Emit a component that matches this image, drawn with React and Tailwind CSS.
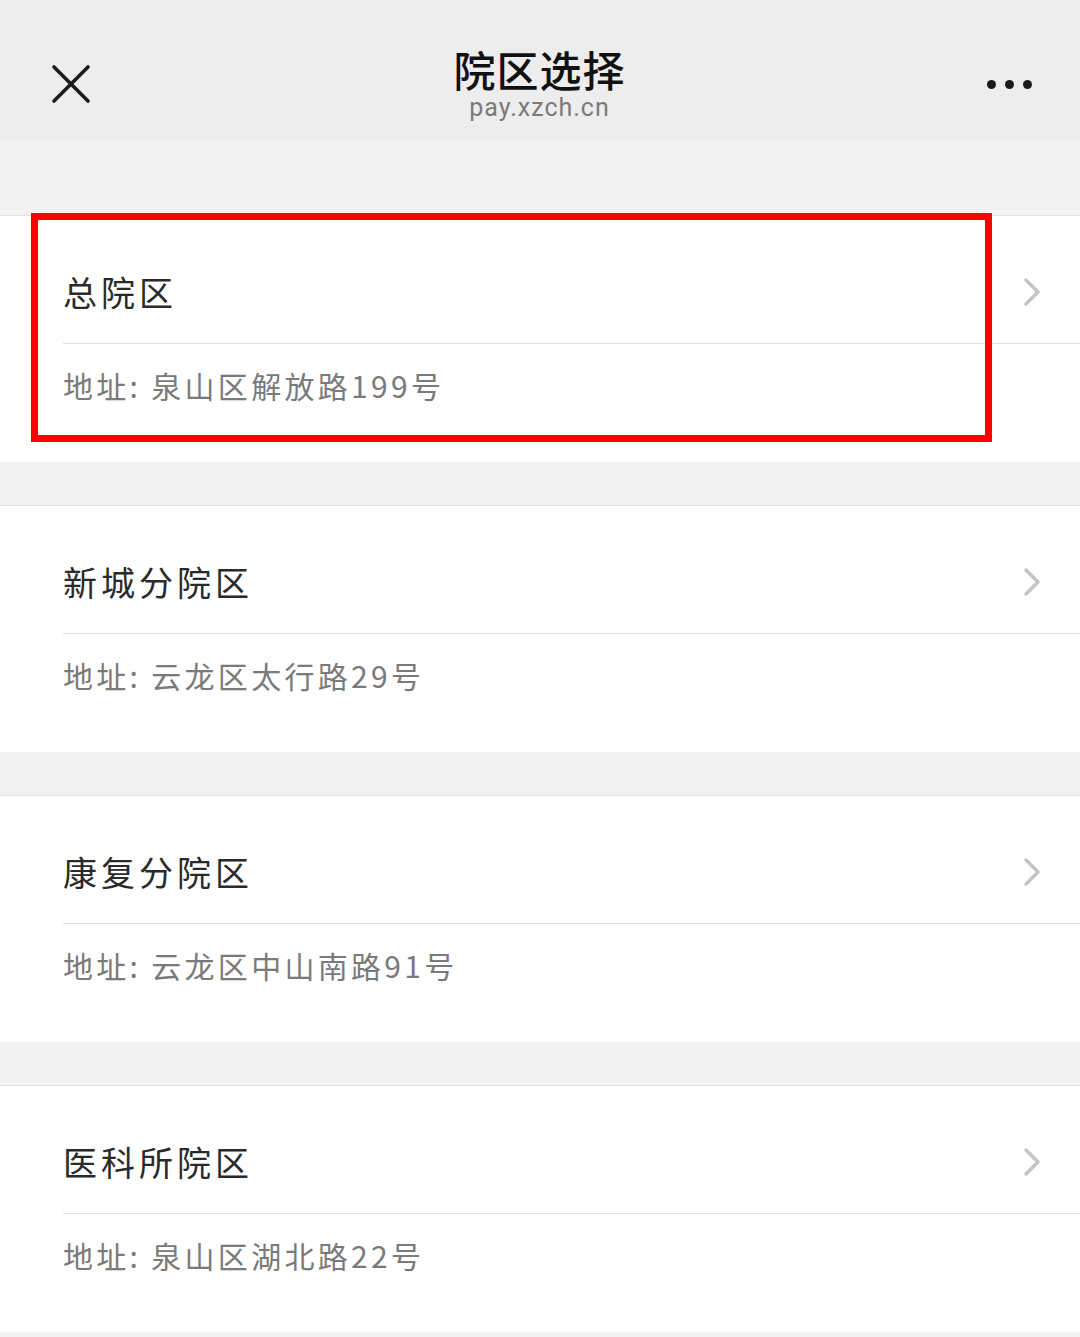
import React from 'react';

const campuses = [
    { name: '总院区', address: '地址: 泉山区解放路199号' },
    { name: '新城分院区', address: '地址: 云龙区太行路29号' },
    { name: '康复分院区', address: '地址: 云龙区中山南路91号' },
    { name: '医科所院区', address: '地址: 泉山区湖北路22号' },
];

const FONT = "font-['Noto_Sans_CJK_SC','Noto_Sans',sans-serif]";

const Chevron = () => (
    <svg width="22" height="30" viewBox="0 0 22 30" className="mr-[37px]">
        <path d="M5 3 L17 15 L5 27" fill="none" stroke="#c4c4c8" strokeWidth="3.5" strokeLinecap="round" strokeLinejoin="round" />
    </svg>
);

const CampusCard = ({ name, address }) => (
    <div className="bg-white border-t border-[#e3e3e3]">
        {/* name row */}
        <div className="h-[127px] pt-[24px] pl-[63px] flex items-center justify-between">
            <span className="text-[34px] leading-[34px] tracking-[4px] text-[#2a2a2a]">{name}</span>
            <Chevron />
        </div>
        {/* address row */}
        <div className="ml-[63px] h-[119px] pb-[36px] border-t border-[#e0e0e0] flex items-center">
            <span className="text-[30px] leading-[30px] tracking-[3.3px] text-[#7a7a7a]">{address}</span>
        </div>
    </div>
);

const App = () => {
    return (
        <div className={`w-[1080px] min-h-[1337px] bg-[#f2f2f2] ${FONT} relative`}>
            {/* top bar */}
            <div className="h-[140px] bg-[#ededed] flex items-start justify-between px-[50px]">
                <svg width="42" height="42" viewBox="0 0 42 42" className="mt-[63px]">
                    <path d="M4 4 L38 38 M38 4 L4 38" stroke="#1a1a1a" strokeWidth="3.6" strokeLinecap="round" />
                </svg>
                <div className="flex flex-col items-center pt-[48px]">
                    <span className="text-[42px] leading-[42px] font-medium text-[#111] tracking-[1px]">院区选择</span>
                    <span className="mt-[4px] text-[25px] leading-[28px] text-[#7a7a7a] font-['Roboto',sans-serif] tracking-[1px]">pay.xzch.cn</span>
                </div>
                <div className="flex gap-[9px] mt-[80px] mr-[-2px]">
                    <span className="w-[9px] h-[9px] rounded-full bg-[#1a1a1a]" />
                    <span className="w-[9px] h-[9px] rounded-full bg-[#1a1a1a]" />
                    <span className="w-[9px] h-[9px] rounded-full bg-[#1a1a1a]" />
                </div>
            </div>

            <div className="pt-[75px] flex flex-col gap-[43px]">
                {campuses.map((c) => (
                    <CampusCard key={c.name} name={c.name} address={c.address} />
                ))}
            </div>

            {/* highlight annotation */}
            <div className="absolute left-[31px] top-[213px] w-[961px] h-[229px] border-[7px] border-[#ff0000] pointer-events-none" />
        </div>
    );
};

export default App;
